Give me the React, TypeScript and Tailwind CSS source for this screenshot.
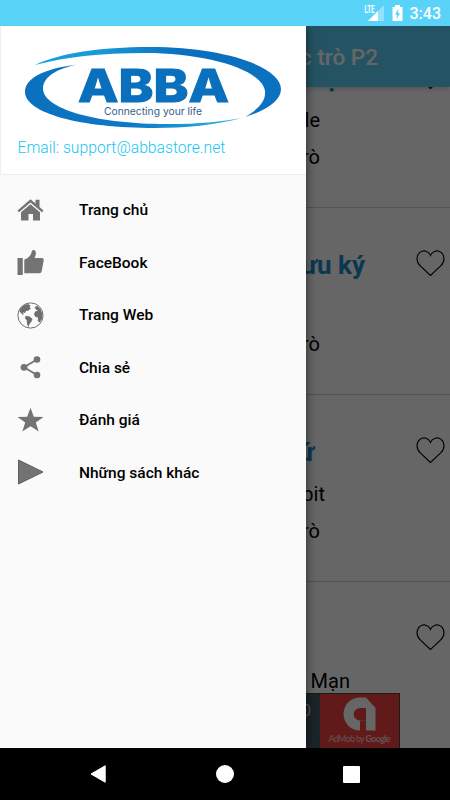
import React from "react";

type Book = {
  title: string;
  titleWidth: string;
  author: string;
  authorWidth: string;
  tag: string;
};

const books: Book[] = [
  { title: "ọ", titleWidth: "w-[339px]", author: "le", authorWidth: "w-[320px]", tag: "trò" },
  { title: "lưu ký", titleWidth: "w-[365px]", author: "", authorWidth: "w-[320px]", tag: "trò" },
  { title: "ứ", titleWidth: "w-[314px]", author: "bit", authorWidth: "w-[325px]", tag: "trò" },
  { title: "", titleWidth: "w-[315px]", author: "Mạn", authorWidth: "w-[350px]", tag: "" },
];

const menu = [
  { label: "Trang chủ", icon: HomeIcon },
  { label: "FaceBook", icon: ThumbIcon },
  { label: "Trang Web", icon: GlobeIcon },
  { label: "Chia sẻ", icon: ShareIcon },
  { label: "Đánh giá", icon: StarIcon },
  { label: "Những sách khác", icon: PlayIcon },
];

export default function App() {
  return (
    <div className="flex h-[800px] w-[450px] flex-col overflow-hidden bg-black font-[Roboto,sans-serif]">
      <StatusBar />

      <div className="relative h-[722px] overflow-hidden bg-white">
        <BookPage />

        {/* Scrim */}
        <div className="absolute inset-0 z-10 bg-black/60"></div>

        <Drawer />
      </div>

      <NavBar />
    </div>
  );
}

/* ===========================================================
   STATUS BAR
=========================================================== */
function StatusBar() {
  return (
    <div className="flex h-[26px] items-start justify-end bg-[#5ad3f9] pr-[9px] text-white">
      <svg className="mt-[4px] h-[18px] w-[20px]" viewBox="0 0 20 18">
        <path d="M20 1V17H4Z" fill="#fff" opacity="0.35" />
        <path d="M14 7V17H4Z" fill="#fff" />
        <text x="0.5" y="8.8" fontSize="10" fontWeight="700" textLength="10" lengthAdjust="spacingAndGlyphs" fill="#fff">
          LTE
        </text>
      </svg>
      <svg className="mt-[4px] ml-[8px] h-[18px] w-[11px]" viewBox="0 0 11 18">
        <path d="M3 1H8V3H10.5V17H0.5V3H3Z" fill="#fff" />
        <path d="M6.6 4.8 2.9 10.6H5L4.4 15 8.1 9.3H6Z" fill="#5ad3f9" />
      </svg>
      <span className="ml-[7px] text-[16px] leading-[28px] font-medium">3:43</span>
    </div>
  );
}

/* ===========================================================
   PAGE BEHIND THE DRAWER
=========================================================== */
function BookPage() {
  return (
    <div className="isolate flex h-full flex-col">
      <div className="relative z-[1] flex h-[61px] shrink-0 items-center bg-[#5ad3f9] shadow-md">
        <h1 className="w-[378px] shrink-0 pt-[2px] text-right text-[22.5px] font-medium whitespace-nowrap text-white">
          Học trò P2
        </h1>
      </div>

      <div className="flex-1 overflow-hidden">
        <div className="-mt-[66px]">
          {books.map((book, i) => (
            <BookRow key={i} book={book} />
          ))}
        </div>
      </div>

      {/* Ad banner */}
      <div className="absolute bottom-0 left-[50px] flex h-[55px] w-[350px] border border-b-0 border-[#444]">
        <div className="flex-1 bg-[#455a64] pt-[5px] pr-[9px] text-right text-[17px] leading-[22px] font-light text-white">0</div>
        <div className="w-[79px] bg-[#f04242]">
          <svg className="h-[54px] w-[79px]" viewBox="0 0 79 54">
            <path d="M40 3.5H46L55.5 14V36.5H46V26.5H40V36.5A16.5 16.5 0 0 1 40 3.5Z" fill="#fff" />
            <path d="M40 14H46V26.5H40A6.2 6.2 0 0 1 40 14Z" fill="#f04242" />
            <text x="8.5" y="48" fontFamily="Lato, sans-serif" fontSize="8.8" textLength="62" fill="#ffc9c9">
              AdMob by <tspan fontWeight="700">Google</tspan>
            </text>
          </svg>
        </div>
      </div>
    </div>
  );
}

function BookRow({ book }: { book: Book }) {
  return (
    <div className="h-[187px] border-b border-[#d0d0d0] pt-[39px]">
      <div className="flex h-[36px] items-center">
        <span className={`${book.titleWidth} text-right text-[26px] font-bold whitespace-nowrap text-[#1590c4]`}>
          {book.title}
        </span>
        <svg className="mr-[5px] mb-[4px] ml-auto h-[28px] w-[29px]" viewBox="0 0 29 28" fill="none" stroke="#000" strokeWidth="1.1">
          <path d="M14.5 26.5 4.3 16.9C-0.2 12.6 0.2 6.4 3.9 3.4 7.7 0.5 12.9 2 14.5 6.4 16.1 2 21.3 0.5 25.1 3.4 28.8 6.4 29.2 12.6 24.7 16.9Z" />
        </svg>
      </div>
      <p className={`${book.authorWidth} mt-[5px] h-[38px] text-right text-[20px] leading-[38px] text-black`}>{book.author}</p>
      <p className="h-[36px] w-[320px] text-right text-[20px] leading-[36px] text-black">{book.tag}</p>
    </div>
  );
}

/* ===========================================================
   DRAWER
=========================================================== */
function Drawer() {
  return (
    <aside className="absolute inset-y-0 left-0 z-20 w-[306px] bg-[#fafafa] shadow-[0_0_10px_rgba(0,0,0,0.6)]">
      <div className="h-[149px] border-b border-l border-[#f3efe4] bg-white">
        <Logo />
        <p className="-mt-[1px] pl-[16.5px] text-[15.7px] leading-[20px] font-light text-[#18c5f7]">
          Email: support@abbastore.net
        </p>
      </div>

      <nav className="pt-[9px]">
        {menu.map(({ label, icon: Icon }) => (
          <a key={label} className="flex h-[52.5px] items-center pl-[17px]">
            <Icon />
            <span className="ml-[35px] pt-[1px] text-[15.5px] font-medium text-black">{label}</span>
          </a>
        ))}
      </nav>
    </aside>
  );
}

function Logo() {
  return (
    <svg className="h-[113px] w-[305px]" viewBox="1 26 305 113">
      <defs>
        <linearGradient id="topSwoosh" x1="0" x2="1">
          <stop offset="0" stopColor="#139fdc" />
          <stop offset="0.25" stopColor="#1a9ad8" />
          <stop offset="0.6" stopColor="#0a6fbd" />
          <stop offset="1" stopColor="#0a72c0" />
        </linearGradient>
        <linearGradient id="bottomSwoosh" x1="0" x2="1">
          <stop offset="0" stopColor="#0a70bd" />
          <stop offset="0.5" stopColor="#0d7ac5" />
          <stop offset="1" stopColor="#2fb3e8" />
        </linearGradient>
      </defs>
      <path d="M35 65C60 53 100 47 150 47C225 47 281 67 281 89C281 100 268 110 245 117C259 109 266 101 265 91C262 69 205 53 145 53C100 53 65 57 35 65Z" fill="url(#topSwoosh)" />
      <path d="M77 64.5C52 70 43 79 43 89C44 109 95 123 160 124C195 124.5 220 122 242 118C215 125 185 128 155 128C80 128 25 113 25 92C25 79 42 69 77 64.5Z" fill="url(#bottomSwoosh)" />
      <text
        x="78"
        y="102.3"
        fontFamily="Inter, sans-serif"
        fontWeight="800"
        fontSize="45.5"
        textLength="151"
        lengthAdjust="spacingAndGlyphs"
        fill="#0a70bd"
        stroke="#0a70bd"
        strokeWidth="1"
      >
        ABBA
      </text>
      <text x="104" y="114.5" fontFamily="Inter, sans-serif" fontSize="10.5" textLength="98" lengthAdjust="spacingAndGlyphs" fill="#33608f">
        Connecting your life
      </text>
    </svg>
  );
}

/* ===========================================================
   MENU ICONS
=========================================================== */
function HomeIcon() {
  return (
    <svg className="h-[27px] w-[27px]" viewBox="0 0 27 27" fill="#737373">
      <path d="M13.5 2.2 18.5 6.5V2.8H22.5V10L26.5 13.5 25 15.3 13.5 5.6 2 15.3 0.5 13.5Z" />
      <path d="M13.5 7.2 23 15.3V23.5H16V17H11.5V23.5H4V15.3Z" />
    </svg>
  );
}

function ThumbIcon() {
  return (
    <svg className="h-[27px] w-[27px]" viewBox="0 0 27 27" fill="#737373">
      <path d="M0.5 9H5.8V26H0.5Z" />
      <path d="M7.3 10.5C11 9.5 14 6.5 14.5 3.5C14.8 1.4 15.8 0.8 17 1.1C19.3 1.7 19.5 5 17.5 9H25C26.5 9.3 27 10.5 26.6 12L24.6 22.5C24.3 23.8 23.6 24.2 22.5 24.2H7.3Z" />
    </svg>
  );
}

function GlobeIcon() {
  return (
    <svg className="h-[27px] w-[27px]" viewBox="0 0 27 27" fill="#6e6e6e">
      <circle cx="13.5" cy="13.5" r="12.6" fill="none" stroke="#6e6e6e" strokeWidth="1" />
      <path d="M3 7C5 4 8 2.5 11 2L13.5 3.5 12.5 5.2 14 6.2 11.5 8.5 9 9 8 11 5.5 10.5 7 13 5.5 12.5 2.5 9.5Z" />
      <path d="M8.5 14 12 14.2 15.5 16.8 14.5 19.5 12.5 22 11.3 25 10 22 9.8 18.5 8 16.2Z" />
      <path d="M17.5 5.5 20 3.8 23.5 7 25.5 12 25 17 22.5 20.5 20.8 19 21 15.5 18.5 15 17 12.5 18 9.5 21 8.8 19 7.5Z" />
    </svg>
  );
}

function ShareIcon() {
  return (
    <svg className="h-[27px] w-[27px]" viewBox="0 0 27 27" fill="#737373">
      <path d="M20 5.5 7 13.3 20 21" fill="none" stroke="#737373" strokeWidth="1.8" />
      <circle cx="20" cy="5.5" r="3.3" />
      <circle cx="7" cy="13.3" r="3.4" />
      <circle cx="20" cy="21" r="3.3" />
    </svg>
  );
}

function StarIcon() {
  return (
    <svg className="h-[27px] w-[27px]" viewBox="0 0 27 27" fill="#737373">
      <path d="M13.5 0.8 16.8 9.7 26.5 10 18.8 15.6 21.7 24.5 13.5 19.2 5.3 24.5 8.2 15.6 0.5 10 10.2 9.7Z" />
    </svg>
  );
}

function PlayIcon() {
  return (
    <svg className="h-[27px] w-[27px]" viewBox="0 0 27 27">
      <path d="M1.5 1 26 13 1.5 25Z" fill="#737373" stroke="#5e5e5e" strokeWidth="1" strokeLinejoin="round" />
    </svg>
  );
}

/* ===========================================================
   NAVIGATION BAR
=========================================================== */
function NavBar() {
  return (
    <div className="flex h-[52px] items-center bg-black pl-[90px]">
      <svg className="h-[18px] w-[16px]" viewBox="0 0 16 18">
        <path d="M15.2 0.8V17.2L1 9Z" fill="#fff" stroke="#fff" strokeWidth="1" strokeLinejoin="round" />
      </svg>
      <div className="ml-[110px] h-[18px] w-[18px] rounded-full bg-white"></div>
      <div className="ml-[109px] h-[17px] w-[17px] rounded-[1px] bg-white"></div>
    </div>
  );
}
